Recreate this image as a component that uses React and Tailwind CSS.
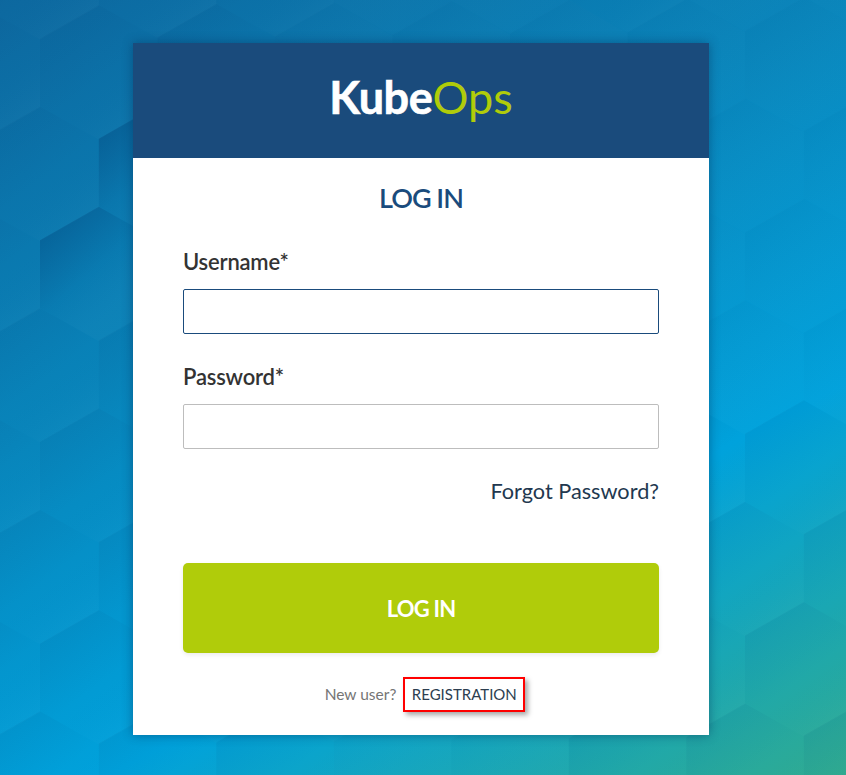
const hexes = [];
for (let j = -2; j < 8; j++) {
  for (let i = -2; i < 16; i++) {
    if ((((i + j) % 2) + 2) % 2 !== 0) continue;
    const cx = 40 + 58.75 * i;
    const top = 107 + 100.8 * j - 0.0113 * cx;
    const pts = [
      [cx, top], [cx + 58.75, top + 33.5], [cx + 58.75, top + 101], [cx, top + 134.5], [cx - 58.75, top + 101], [cx - 58.75, top + 33.5],
    ].map((p) => p.map((n) => n.toFixed(1)).join(",")).join(" ");
    const key = `${i},${j}`;
    const strong = ["2,0", "1,1"].includes(key);
    const weak = (cx > 300 && cx < 600) || (cx > 650 && top < 350);
    hexes.push({ pts, fill: strong ? "url(#hexStrong)" : weak ? "url(#hexWeak)" : "url(#hexMid)", key });
  }
}

function Field({ label, focused }) {
  return (
    <div>
      <label className="block text-[22px] leading-[30px] font-semibold text-[#333333] tracking-[-0.2px]">{label}</label>
      <input
        type="text"
        aria-label={label}
        className={`mt-[12px] block w-full h-[45px] bg-white rounded-[2px] border outline-none ${focused ? "border-[#1a4b7c]" : "border-[#bdbdbd]"}`}
      />
    </div>
  );
}

export default function App() {
  return (
    <div className="relative w-full h-[775px] overflow-hidden font-['Lato','Noto_Sans',sans-serif] bg-[linear-gradient(152deg,#0d689f_0%,#0885bb_37%,#00a2dc_68%,#30ab90_100%)]">
      <svg className="absolute inset-0 w-full h-full" viewBox="0 0 846 775" aria-hidden="true">
        <defs>
          <linearGradient id="hexStrong" x1="0" y1="0.2" x2="0.5" y2="0.85">
            <stop offset="0" stopColor="#003a70" stopOpacity="0.34" />
            <stop offset="0.6" stopColor="#003a70" stopOpacity="0.03" />
            <stop offset="1" stopColor="#ffffff" stopOpacity="0.02" />
          </linearGradient>
          <linearGradient id="hexMid" x1="0.1" y1="0.05" x2="0.7" y2="0.95">
            <stop offset="0" stopColor="#003a70" stopOpacity="0.09" />
            <stop offset="0.6" stopColor="#003a70" stopOpacity="0" />
            <stop offset="1" stopColor="#ffffff" stopOpacity="0.02" />
          </linearGradient>
          <linearGradient id="hexWeak" x1="0.1" y1="0.05" x2="0.7" y2="0.95">
            <stop offset="0" stopColor="#003a70" stopOpacity="0.04" />
            <stop offset="1" stopColor="#ffffff" stopOpacity="0.01" />
          </linearGradient>
        </defs>
        {hexes.map((h) => (
          <polygon key={h.key} points={h.pts} fill={h.fill} />
        ))}
      </svg>

      <div className="relative flex justify-center pt-[43px] pr-[4px]">
        <div className="w-[576px] h-[692px] bg-white shadow-[0_0_10px_rgba(0,40,80,0.45)]">
          <div className="h-[115px] bg-[#1a4b7c] flex items-center justify-center">
            <div className="text-[45px] leading-none -mt-[7px]">
              <span className="font-bold text-white tracking-[-0.4px] [-webkit-text-stroke:0.6px_white]">Kube</span>
              <span className="font-normal text-[#b0cc0a]">Ops</span>
            </div>
          </div>

          <div className="px-[50px]">
            <h1 className="mt-[23px] text-center text-[27px] leading-[34px] font-semibold text-[#1a4b7c] tracking-[-1px]">LOG IN</h1>

            <div className="mt-[32px] flex flex-col gap-[28px]">
              <Field label="Username*" focused />
              <Field label="Password*" />
            </div>

            <div className="mt-[28px] text-right text-[21.7px] leading-[28px] text-[#22384f]">
              <a href="#">Forgot Password?</a>
            </div>

            <button className="mt-[58px] block w-full h-[90px] rounded-[5px] bg-[#b0cc0a] text-white text-[22px] font-bold tracking-[-0.8px] shadow-[0_2px_4px_rgba(0,0,0,0.08)]">
              LOG IN
            </button>

            <div className="mt-[24px] ml-[8px] flex items-center justify-center gap-[7px] text-[15px]">
              <span className="text-[15.5px] text-[#757575]">New user?</span>
              <a href="#" className="h-[35px] w-[122px] flex items-center justify-center border-2 border-[#ff0000] text-[#2c3e50] shadow-[3px_3px_5px_rgba(0,0,0,0.35)]">
                REGISTRATION
              </a>
            </div>
          </div>
        </div>
      </div>
    </div>
  );
}
